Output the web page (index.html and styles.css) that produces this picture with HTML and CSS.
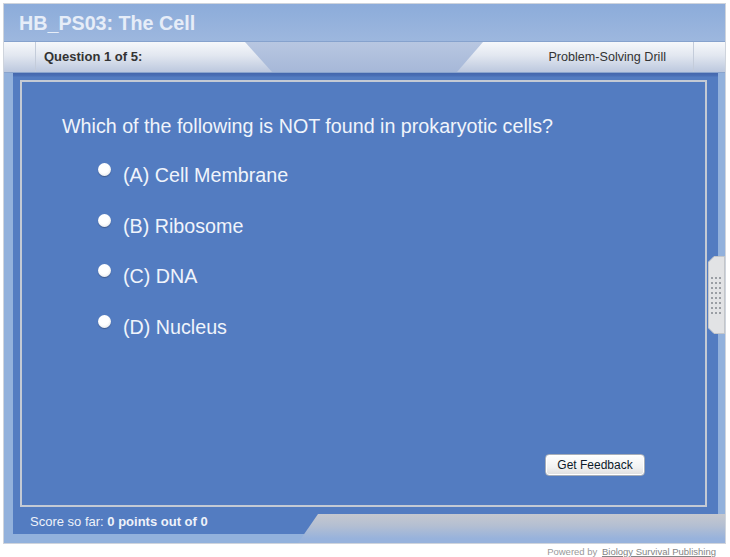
FILE: index.html
```html
<!DOCTYPE html>
<html lang="en">
<head>
    <meta charset="UTF-8">
    <title>HB_PS03: The Cell</title>
    <link rel="stylesheet" href="styles.css">
</head>
<body>
    <div class="page">
        <div class="frame">
            <!-- Title -->
            <div class="title-bar">HB_PS03: The Cell</div>

            <!-- Tabs -->
            <div class="tab-bar">
                <div class="tab-cap tab-cap-left"></div>
                <div class="tab tab-left">Question 1 of 5:</div>
                <div class="tab-gap"></div>
                <div class="tab tab-right">Problem-Solving Drill</div>
                <div class="tab-cap tab-cap-right"></div>
            </div>

            <!-- Question panel -->
            <div class="frame-body">
                <div class="panel">
                    <div class="question-box">
                        <p class="question">Which of the following is NOT found in prokaryotic cells?</p>
                        <div class="options">
                            <label class="option"><span class="radio"></span>(A) Cell Membrane</label>
                            <label class="option"><span class="radio"></span>(B) Ribosome</label>
                            <label class="option"><span class="radio"></span>(C) DNA</label>
                            <label class="option"><span class="radio"></span>(D) Nucleus</label>
                        </div>
                        <div class="actions">
                            <button class="feedback-button">Get Feedback</button>
                        </div>
                    </div>
                    <div class="score">Score so far: <b>0 points out of 0</b></div>
                </div>
            </div>

            <div class="bottom-tab"></div>

            <div class="side-handle">
                <svg width="17" height="78" viewBox="0 0 17 78">
                    <polygon points="6,0.5 16.5,0.5 16.5,77.5 6,77.5 0.5,72 0.5,6" fill="#e2e3e5" stroke="#c3c6ca"/>
                    <g fill="#9a9ea4">
                        <rect x="3" y="21" width="2" height="2"/><rect x="7" y="21" width="2" height="2"/><rect x="11" y="21" width="2" height="2"/>
                        <rect x="3" y="26" width="2" height="2"/><rect x="7" y="26" width="2" height="2"/><rect x="11" y="26" width="2" height="2"/>
                        <rect x="3" y="31" width="2" height="2"/><rect x="7" y="31" width="2" height="2"/><rect x="11" y="31" width="2" height="2"/>
                        <rect x="3" y="36" width="2" height="2"/><rect x="7" y="36" width="2" height="2"/><rect x="11" y="36" width="2" height="2"/>
                        <rect x="3" y="41" width="2" height="2"/><rect x="7" y="41" width="2" height="2"/><rect x="11" y="41" width="2" height="2"/>
                        <rect x="3" y="46" width="2" height="2"/><rect x="7" y="46" width="2" height="2"/><rect x="11" y="46" width="2" height="2"/>
                        <rect x="3" y="51" width="2" height="2"/><rect x="7" y="51" width="2" height="2"/><rect x="11" y="51" width="2" height="2"/>
                        <rect x="3" y="56" width="2" height="2"/><rect x="7" y="56" width="2" height="2"/><rect x="11" y="56" width="2" height="2"/>
                    </g>
                </svg>
            </div>
        </div>

        <div class="powered">Powered by <a href="#">Biology Survival Publishing</a></div>
    </div>
</body>
</html>
```

FILE: styles.css
```css
/* Base */
body, html {
    margin: 0;
    padding: 0;
    background: #fff;
    font-family: 'Liberation Sans', Arial, sans-serif;
}

.page {
    padding: 3px 0 0 3px;
}

/* Frame */
.frame {
    position: relative;
    width: 723px;
    box-sizing: border-box;
    border: 1px solid #cfd4dc;
    background: #92b1dc;
}

.title-bar {
    height: 36px;
    padding: 1px 15px 0;
    line-height: 36px;
    font-size: 19.7px;
    font-weight: bold;
    color: #e6edf8;
    background: linear-gradient(#8cacda, #9db7de);
    border-bottom: 1px solid #86a2cd;
}

/* Tabs */
.tab-bar {
    display: flex;
    height: 30px;
    line-height: 30px;
    color: #333;
    background: linear-gradient(#f6f8fb, #e2e7f0 45%, #bcc8de);
    border-bottom: 1px solid #8aa4cd;
}

.tab-cap {
    width: 31px;
}

.tab-cap-left {
    border-right: 1px solid #c4ccda;
}

.tab-cap-right {
    border-left: 1px solid #c4ccda;
}

.tab {
    font-size: 12.6px;
}

.tab-left {
    width: 201px;
    padding-left: 8px;
    font-size: 13px;
    font-weight: bold;
}

.tab-gap {
    width: 238px;
    background: linear-gradient(#b8c7e1, #a6b8d8);
    clip-path: polygon(0 0, 100% 0, calc(100% - 26px) 100%, 27px 100%);
}

.tab-right {
    width: 183px;
    padding-right: 27px;
    text-align: right;
}

/* Panel */
.frame-body {
    padding: 0 7px 9px 9px;
}

.panel {
    height: 461px;
    box-sizing: border-box;
    padding: 7px 11px 0 7px;
    background: linear-gradient(#4467ad, #4a70b6 3px, #537cc1 4px);
}

.question-box {
    display: flex;
    flex-direction: column;
    height: 427px;
    box-sizing: border-box;
    border: 2px solid #c4cad4;
    padding: 32px 0 29px 40px;
    color: #f0f4fb;
    font-size: 19.7px;
}

.question {
    margin: 0;
    line-height: 24px;
}

.options {
    display: flex;
    flex-direction: column;
    gap: 26.67px;
    margin-top: 25px;
    padding-left: 36px;
}

.option {
    display: flex;
    line-height: 24px;
    cursor: pointer;
}

.radio {
    width: 13px;
    height: 13px;
    margin: 0 12px 0 0;
    border-radius: 50%;
    background: radial-gradient(circle at 45% 40%, #fff 0, #fff 45%, #dcdcdc 100%);
    box-shadow: 0 1px 1px rgba(40, 50, 70, 0.45);
}

.actions {
    display: flex;
    justify-content: flex-end;
    margin-top: auto;
    padding-right: 60px;
}

.feedback-button {
    width: 100px;
    height: 22px;
    padding: 0;
    font-family: 'Liberation Sans', Arial, sans-serif;
    font-size: 12px;
    color: #0d1a2a;
    background: linear-gradient(#ffffff, #f2f2f2 60%, #dedede);
    border: 1px solid #a7aeb8;
    border-radius: 4px;
    box-shadow: inset 0 0 0 1px #fff;
    cursor: pointer;
}

.score {
    margin: 8px 0 0 10px;
    line-height: 14px;
    font-size: 13px;
    color: #eef2fa;
}

/* Bottom tab */
.bottom-tab {
    position: absolute;
    left: 294px;
    right: 0;
    bottom: 0;
    height: 29px;
    background: linear-gradient(#c5c8cf, #b4bfd2 40%, #97b2dc 85%);
    clip-path: polygon(20px 0, 100% 0, 100% 100%, 0 100%);
}

/* Side handle */
.side-handle {
    position: absolute;
    top: 252px;
    right: 0;
    width: 17px;
    height: 78px;
}

.side-handle svg {
    display: block;
}

/* Footer */
.powered {
    width: 713px;
    margin-top: 2px;
    text-align: right;
    font-size: 9.5px;
    line-height: 11px;
    color: #999;
}

.powered a {
    margin-left: 2px;
    color: #858585;
}
```
